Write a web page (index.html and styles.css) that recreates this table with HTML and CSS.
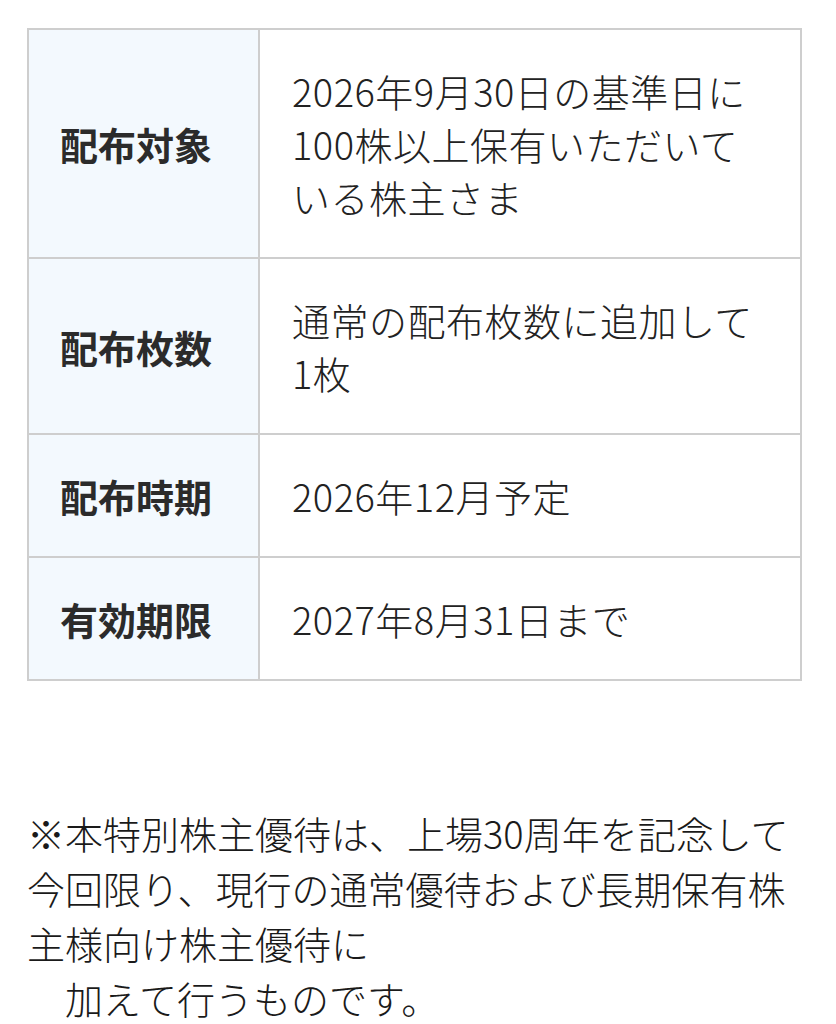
FILE: index.html
```html
<!DOCTYPE html>
<html lang="ja">
<head>
<meta charset="utf-8">
<title>特別株主優待</title>
<link rel="stylesheet" href="styles.css">
</head>
<body>
<div class="page">
  <div class="spec">
    <div class="spec-head">配布対象</div>
    <div class="spec-body">2026年9月30日の基準日に100株以上保有いただいている株主さま</div>
    <div class="spec-head">配布枚数</div>
    <div class="spec-body">通常の配布枚数に追加して1枚</div>
    <div class="spec-head">配布時期</div>
    <div class="spec-body">2026年12月予定</div>
    <div class="spec-head">有効期限</div>
    <div class="spec-body">2027年8月31日まで</div>
  </div>
  <p class="note">※本特別株主優待は、上場30周年を記念して今回限り、現行の通常優待および長期保有株主様向け株主優待に<br>　加えて行うものです。</p>
</div>
</body>
</html>
```

FILE: styles.css
```css
html, body {
  margin: 0;
  padding: 0;
  background: #ffffff;
}

body {
  font-family: "Noto Sans CJK JP", "Noto Sans", sans-serif;
  font-size: 38px;
  color: #222222;
}

.page {
  padding: 28px 0 0 27px;
  width: 775px;
}

.spec {
  display: grid;
  grid-template-columns: 231px 1fr;
  border-top: 2px solid #cecece;
  border-left: 2px solid #cecece;
}

.spec-head,
.spec-body {
  border-right: 2px solid #cecece;
  border-bottom: 2px solid #cecece;
  line-height: 53px;
  padding-top: 34px;
  padding-bottom: 34px;
}

.spec-head {
  background: #f3f9fe;
  font-weight: 700;
  color: #2b2b2b;
  padding-left: 31px;
  display: flex;
  align-items: center;
}

.spec-body {
  padding-left: 32px;
  padding-right: 40px;
  color: #222222;
  font-weight: 300;
  letter-spacing: 0.5px;
}

.note {
  margin: 124px 0 0 0;
  line-height: 55px;
  color: #1a1a1a;
  font-weight: 300;
}
```
